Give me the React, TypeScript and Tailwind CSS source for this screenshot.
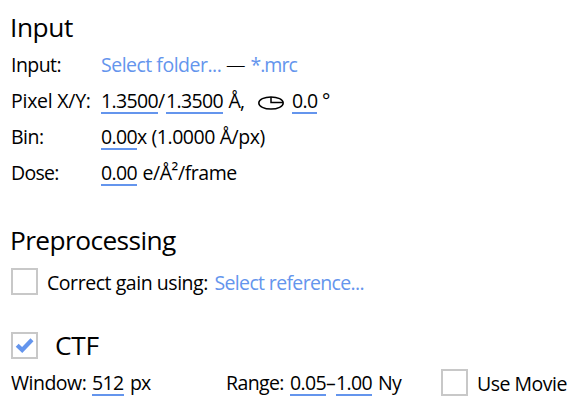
import type { ReactNode } from "react";

function Value({ className = "", children }: { className?: string; children: ReactNode }) {
  return (
    <span className={`mt-[5px] h-[26px] shrink-0 border-b-2 border-[#6495ed] leading-[26px] tracking-[-0.65px] ${className}`}>
      {children}
    </span>
  );
}

function CheckBox({ checked = false }: { checked?: boolean }) {
  return (
    <span className="flex size-[27px] shrink-0 items-center justify-center border-2 border-[#c8c8c8] bg-white">
      {checked && (
        <svg width="19" height="17" viewBox="0 0 19 17" fill="none">
          <path d="M2.2 8.2 L7.2 13 L17 2.7" stroke="#6495ed" strokeWidth="4.2" />
        </svg>
      )}
    </span>
  );
}

function PieIcon() {
  return (
    <svg className="mt-[13px] shrink-0" width="26" height="14" viewBox="0 0 26 14" fill="none" stroke="#000" strokeWidth="1.5">
      <ellipse cx="13" cy="7" rx="12.2" ry="6.1" />
      <path d="M13 1v5.5h12" />
    </svg>
  );
}

export default function App() {
  return (
    <div className="h-[412px] w-[572px] overflow-hidden whitespace-nowrap bg-white pl-[11px] font-['Open_Sans','Noto_Sans',sans-serif] text-[19.5px] text-black">
      <h2 className="-ml-px h-[47px] pt-[9px] text-[26.3px] leading-[36px] tracking-[-0.45px]">Input</h2>

      <div className="flex h-9 leading-9">
        <span className="w-[90px] tracking-[-0.55px]">Input:</span>
        <span className="w-[125px] tracking-[-0.5px] text-[#6495ed]">Select folder...</span>
        <span className="w-[24.5px] font-light">—</span>
        <span className="tracking-[-1px] text-[#6495ed]">*.mrc</span>
      </div>
      <div className="flex h-9 leading-9">
        <span className="w-[90px] tracking-[-0.25px]">Pixel X/Y:</span>
        <Value className="w-[57px]">1.3500</Value>
        <span className="w-[8px]">/</span>
        <Value className="w-[57px]">1.3500</Value>
        <span className="ml-[5.5px] w-[29.5px] tracking-[-0.9px]">Å,</span>
        <PieIcon />
        <Value className="ml-[8px] w-[25px]">0.0</Value>
        <span className="ml-[5px]">°</span>
      </div>
      <div className="flex h-9 leading-9">
        <span className="w-[90px] tracking-[-0.5px]">Bin:</span>
        <Value className="w-[36px]">0.00</Value>
        <span className="tracking-[-0.43px]">x (1.0000 Å/px)</span>
      </div>
      <div className="flex h-9 leading-9">
        <span className="w-[90px] tracking-[-0.7px]">Dose:</span>
        <Value className="w-[36px]">0.00</Value>
        <span className="ml-[5.5px] tracking-[-0.45px]">
          e/Å<span className="relative -top-[2px]">²</span>/frame
        </span>
      </div>

      <h2 className="-ml-px mt-[31px] h-[42px] text-[26.3px] leading-[36px] tracking-[-0.6px]">Preprocessing</h2>
      <div className="flex h-9">
        <div className="mt-1 w-[36px]">
          <CheckBox />
        </div>
        <span className="mt-px w-[167.5px] leading-9 tracking-[-0.45px]">Correct gain using:</span>
        <span className="mt-px leading-9 tracking-[-0.65px] text-[#6495ed]">Select reference...</span>
      </div>

      <div className="mt-[27px] flex h-[38px]">
        <div className="mt-[5px] w-[44px]">
          <CheckBox checked />
        </div>
        <h2 className="text-[26.3px] leading-[36px] tracking-[-0.3px]">CTF</h2>
      </div>
      <div className="flex h-9 leading-9">
        <span className="w-[81px] tracking-[-0.5px]">Window:</span>
        <Value className="w-[32px]">512</Value>
        <span className="ml-[6px] w-[96px] tracking-[-0.9px]">px</span>
        <span className="w-[64px] tracking-[-0.6px]">Range:</span>
        <Value className="w-[36px]">0.05</Value>
        <span className="w-[10px]">–</span>
        <Value className="w-[36px]">1.00</Value>
        <span className="ml-[6px] w-[63px] tracking-[-0.8px]">Ny</span>
        <div className="mt-[4px] w-[36px]">
          <CheckBox />
        </div>
        <span className="mt-px tracking-[-0.5px]">Use Movie</span>
      </div>
    </div>
  );
}
